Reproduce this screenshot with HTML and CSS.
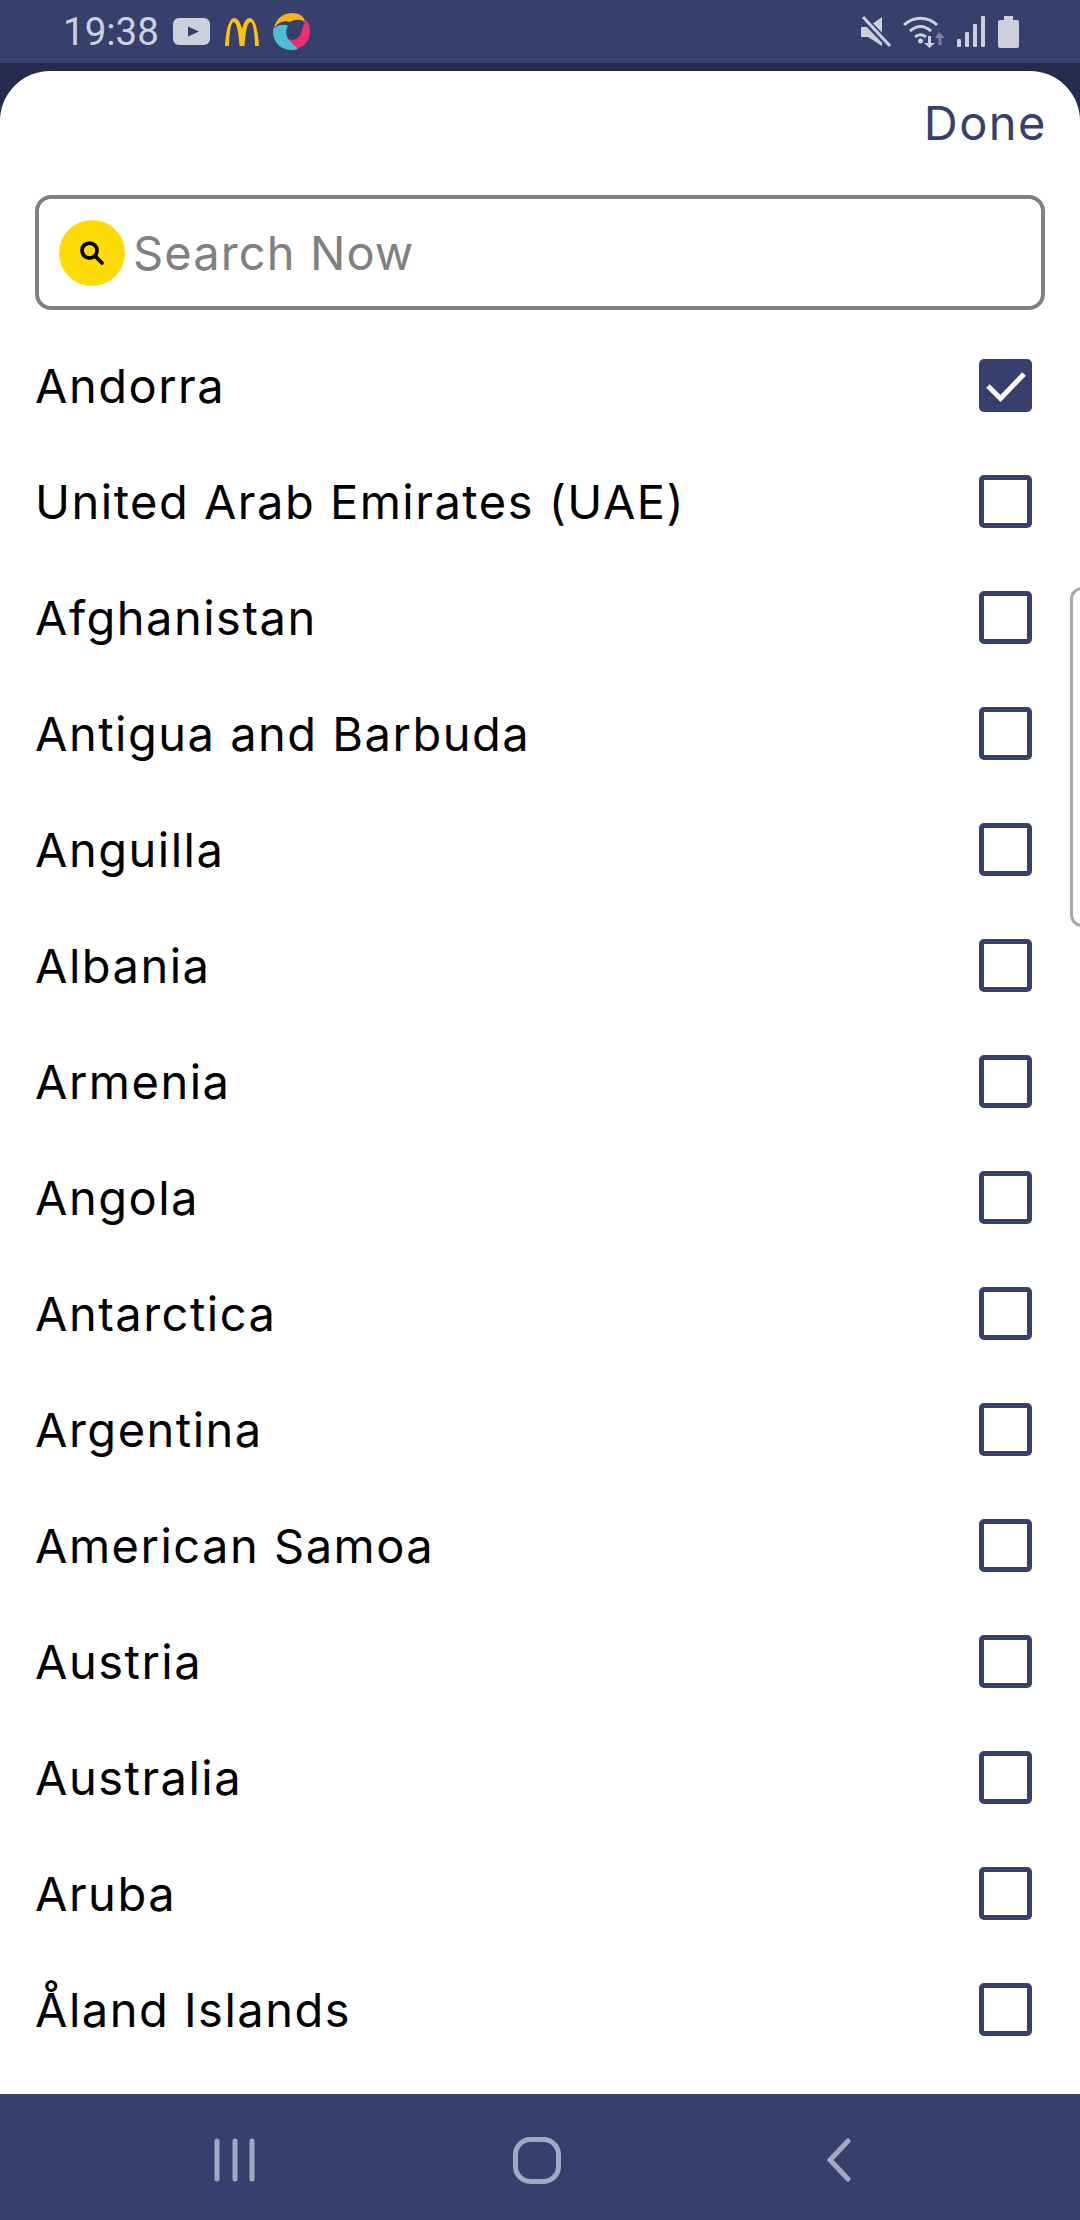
FILE: index.html
```html
<!DOCTYPE html>
<html lang="en">
<head>
    <meta charset="UTF-8">
    <meta name="viewport" content="width=device-width, initial-scale=1.0">
    <title>Select Country</title>
    <link rel="stylesheet" href="styles.css">
</head>
<body>
    <div class="phone">
        <div class="status-bar">
            <div class="status-left">
                <span class="time">19:38</span>
                <svg class="ic-yt" viewBox="0 0 37 27"><rect width="37" height="27" rx="6" fill="#cdd0dc"/><path d="M15 8.500L26 13.500L15 18.500Z" fill="#373f6d"/></svg>
                <svg class="ic-mc" viewBox="0 0 34 30"><path d="M0 29C1 12 4 1 9.500 1C13 1 15.500 6 17 12C18.500 6 21 1 24.500 1C30 1 33 12 34 29H30C29.500 14 28 5 25.500 5C22.500 5 20.500 14 19.500 29H14.500C13.500 14 11.500 5 8.500 5C6 5 4.500 14 4 29Z" fill="#fcc20f"/></svg>
                <svg class="ic-app" viewBox="0 0 37 37">
                    <path d="M1 15C3 5 11 0 19 0C26 0 31 3 32 9C28 6 22 6 17 9C11 7 5 10 1 15Z" fill="#fbb016"/>
                    <path d="M32 6C36 10 37 14 37 19C37 29 29 35 24 35C19 34 17 30 15 26C22 29 28 24 29 17C30 13 32 10 32 6Z" fill="#ee2f6f"/>
                    <path d="M1 15C6 11 12 11 15 13C12 18 13 24 17 28C20 31 23 34 25 36C22 37 20 37 18 37C8 37 0 29 0 19C0 17 0 16 1 15Z" fill="#4fbdd6"/>
                </svg>
            </div>
            <div class="status-right">
                <svg class="ic-mute" viewBox="0 0 30 32"><path d="M0 11H7L21 1V30L7 21H0Z" fill="#cdd0dc"/><path d="M2 2L29 30" stroke="#373f6d" stroke-width="7"/><path d="M2 1L29 30" stroke="#cdd0dc" stroke-width="3"/></svg>
                <svg class="ic-wifi" viewBox="0 0 44 32">
                    <g fill="none" stroke="#cdd0dc" stroke-width="3"><path d="M1 9C11 0 24 0 34 9"/><path d="M7 15C14 9 21 9 28 15"/><path d="M12 21C15 18 20 18 23 21"/></g>
                    <circle cx="17.500" cy="25" r="2.500" fill="#cdd0dc"/>
                    <path d="M25 20H28V27H32L26.500 32L21 27H25Z" fill="#cdd0dc"/>
                    <path d="M36 16L42 22H38.500V29H35.500V22H32Z" fill="#7c829f"/>
                </svg>
                <svg class="ic-signal" viewBox="0 0 28 31"><g fill="#cdd0dc"><rect y="23" width="4" height="8" rx="1"/><rect x="8" y="16" width="4" height="15" rx="1"/><rect x="16" y="8" width="4" height="23" rx="1"/><rect x="24" width="4" height="31" rx="1"/></g></svg>
                <svg class="ic-battery" viewBox="0 0 21 32"><path d="M6 0H15V4H19Q21 4 21 6V30Q21 32 19 32H2Q0 32 0 30V6Q0 4 2 4H6Z" fill="#cdd0dc"/></svg>
            </div>
        </div>

        <div class="backdrop">
            <div class="sheet">
                <div class="sheet-head">
                    <span class="done">Done</span>
                </div>
                <div class="search-box">
                    <span class="search-btn">
                        <svg viewBox="0 0 24 24"><circle cx="10" cy="10" r="6" fill="none" stroke="#000" stroke-width="3"/><path d="M14.500 14.500L20 20" stroke="#000" stroke-width="3" stroke-linecap="round"/></svg>
                    </span>
                    <span class="search-text">Search Now</span>
                </div>
                <div class="list">
                    <div class="row"><span>Andorra</span><span class="check checked"><svg viewBox="0 0 53 53"><path d="M9 27L21.500 39.500L45 15" fill="none" stroke="#fff" stroke-width="5"/></svg></span></div>
                    <div class="row"><span>United Arab Emirates (UAE)</span><span class="check"></span></div>
                    <div class="row"><span>Afghanistan</span><span class="check"></span></div>
                    <div class="row"><span>Antigua and Barbuda</span><span class="check"></span></div>
                    <div class="row"><span>Anguilla</span><span class="check"></span></div>
                    <div class="row"><span>Albania</span><span class="check"></span></div>
                    <div class="row"><span>Armenia</span><span class="check"></span></div>
                    <div class="row"><span>Angola</span><span class="check"></span></div>
                    <div class="row"><span>Antarctica</span><span class="check"></span></div>
                    <div class="row"><span>Argentina</span><span class="check"></span></div>
                    <div class="row"><span>American Samoa</span><span class="check"></span></div>
                    <div class="row"><span>Austria</span><span class="check"></span></div>
                    <div class="row"><span>Australia</span><span class="check"></span></div>
                    <div class="row"><span>Aruba</span><span class="check"></span></div>
                    <div class="row"><span>Åland Islands</span><span class="check"></span></div>
                </div>
                <div class="edge-handle"></div>
            </div>
        </div>

        <div class="nav-bar">
            <svg class="nav-menu" viewBox="0 0 44 44"><g stroke="#a4a9bf" stroke-width="5" stroke-linecap="round"><path d="M4 3V41"/><path d="M22 3V41"/><path d="M39 3V41"/></g></svg>
            <svg class="nav-home" viewBox="0 0 48 47"><rect x="2.500" y="2.500" width="43" height="42" rx="15" fill="none" stroke="#a4a9bf" stroke-width="5"/></svg>
            <svg class="nav-back" viewBox="0 0 26 44"><path d="M22 3L4 22L22 41" fill="none" stroke="#a4a9bf" stroke-width="5" stroke-linecap="round"/></svg>
        </div>
    </div>
</body>
</html>
```

FILE: styles.css
```css
* {
    box-sizing: border-box;
}
body {
    margin: 0;
    background: #ffffff;
    font-family: Inter, "Noto Sans", sans-serif;
}
.phone {
    width: 1080px;
    height: 2220px;
    display: flex;
    flex-direction: column;
    overflow: hidden;
}

/* status bar */
.status-bar {
    height: 63px;
    flex: none;
    background: #373f6d;
    display: flex;
    justify-content: space-between;
    align-items: center;
    padding: 0 61px 0 63px;
}
.status-left, .status-right {
    display: flex;
    align-items: center;
}
.time {
    font-family: Roboto, sans-serif;
    font-size: 38.500px;
    color: #cdd0dc;
    margin-right: 14px;
}
.ic-yt { width: 37px; height: 27px; margin-right: 15px; }
.ic-mc { width: 34px; height: 30px; margin-right: 14px; }
.ic-app { width: 37px; height: 37px; }
.ic-mute { width: 30px; height: 32px; margin-right: 12px; }
.ic-wifi { width: 44px; height: 32px; margin-right: 10px; }
.ic-signal { width: 28px; height: 31px; margin-right: 13px; }
.ic-battery { width: 21px; height: 32px; }

/* sheet */
.backdrop {
    flex: 1;
    background: #252b4f;
    padding-top: 8px;
    min-height: 0;
}
.sheet {
    position: relative;
    height: 100%;
    background: #ffffff;
    border-radius: 50px 50px 0 0;
}
.sheet-head {
    height: 124px;
    display: flex;
    justify-content: flex-end;
    padding: 22px 33px 0 0;
}
.done {
    font-size: 47px;
    line-height: 60px;
    letter-spacing: 1.500px;
    color: #373f6d;
}
.search-box {
    height: 115px;
    margin: 0 35px 17px;
    border: 4px solid #808080;
    border-radius: 16px;
    display: flex;
    align-items: center;
    padding-left: 20px;
}
.search-btn {
    width: 66px;
    height: 66px;
    border-radius: 50%;
    background: #fedb05;
    display: flex;
    align-items: center;
    justify-content: center;
    margin-right: 8px;
}
.search-btn svg {
    width: 30px;
    height: 30px;
}
.search-text {
    font-size: 47px;
    letter-spacing: 1.100px;
    color: #808080;
}
.row {
    height: 116px;
    display: flex;
    align-items: center;
    justify-content: space-between;
    padding: 0 48px 0 35px;
    font-size: 47px;
    letter-spacing: 1.500px;
    color: #000000;
}
.check {
    width: 53px;
    height: 53px;
    border: 5px solid #373f6d;
    border-radius: 5px;
    flex: none;
}
.check.checked {
    border: none;
    background: #373f6d;
}
.check svg {
    display: block;
}
.edge-handle {
    position: absolute;
    top: 516px;
    right: -20px;
    width: 30px;
    height: 340px;
    border: 3px solid #a8a8a8;
    border-radius: 12px;
    background: #ffffff;
}

/* nav bar */
.nav-bar {
    height: 126px;
    flex: none;
    background: #373f6d;
    display: flex;
    align-items: center;
    padding: 6px 0 0 213px;
}
.nav-menu { width: 44px; height: 44px; margin-right: 256px; }
.nav-home { width: 48px; height: 47px; margin-right: 265px; }
.nav-back { width: 26px; height: 44px; }
```
